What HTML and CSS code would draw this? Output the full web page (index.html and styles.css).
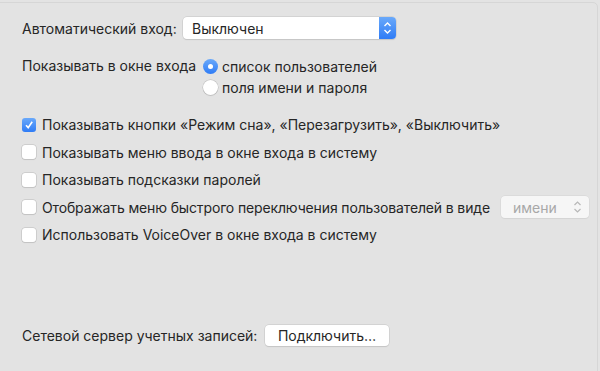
FILE: index.html
```html
<!DOCTYPE html>
<html lang="ru">
<head>
<meta charset="UTF-8" />
<title>Параметры входа</title>
<link rel="stylesheet" href="styles.css">
</head>
<body>
<div class="panel">

  <div class="row auto-login">
    <span class="label">Автоматический вход:</span>
    <div class="popup">
      <span>Выключен</span>
      <span class="stepper blue">
        <svg width="9" height="14" viewBox="0 0 9 14"><path d="M1.5 5 4.5 2 7.5 5M1.5 9 4.5 12 7.5 9" fill="none" stroke="#fff" stroke-width="1.4"/></svg>
      </span>
    </div>
  </div>

  <div class="row show-in">
    <span class="label">Показывать в окне входа</span>
    <div class="radios">
      <div class="radio-item"><span class="radio on"></span>список пользователей</div>
      <div class="radio-item"><span class="radio"></span>поля имени и пароля</div>
    </div>
  </div>

  <div class="checks">
    <div class="check-item"><span class="check on">
      <svg width="10" height="10" viewBox="0 0 10 10"><path d="M2 5.2 4.2 7.6 8.2 1.8" fill="none" stroke="#fff" stroke-width="1.6"/></svg>
    </span>Показывать кнопки «Режим сна», «Перезагрузить», «Выключить»</div>
    <div class="check-item"><span class="check"></span>Показывать меню ввода в окне входа в систему</div>
    <div class="check-item"><span class="check"></span>Показывать подсказки паролей</div>
    <div class="check-item"><span class="check"></span><span class="tight">Отображать меню быстрого переключения пользователей в виде</span>
      <div class="popup small disabled">
        <span>имени</span>
        <span class="stepper">
          <svg width="9" height="14" viewBox="0 0 9 14"><path d="M1.5 5 4.5 2 7.5 5M1.5 9 4.5 12 7.5 9" fill="none" stroke="#b8b8b8" stroke-width="1.2"/></svg>
        </span>
      </div>
    </div>
    <div class="check-item"><span class="check"></span>Использовать VoiceOver в окне входа в систему</div>
  </div>

  <div class="row server">
    <span class="label">Сетевой сервер учетных записей:</span>
    <button class="btn">Подключить…</button>
  </div>

</div>
</body>
</html>
```

FILE: styles.css
```css
html, body {
  margin: 0;
  height: 100%;
}

body {
  background-color: #e3e3e3;
  font-family: Inter, "Noto Sans", sans-serif;
  font-size: 14px;
  color: #262626;
  overflow: hidden;
}

.panel {
  position: relative;
  margin: 2px 2px 0 -10px;
  height: 380px;
  border: 1px solid #d6d6d6;
  border-radius: 5px;
  padding: 0 0 0 31px;
  box-sizing: border-box;
}

.row {
  display: flex;
  align-items: center;
}

.auto-login {
  margin-top: 14px;
  height: 22px;
}

.auto-login .label {
  width: 161px;
}

.popup {
  display: flex;
  align-items: center;
  justify-content: space-between;
  flex-shrink: 0;
  width: 213px;
  height: 22px;
  box-sizing: border-box;
  background: #fff;
  border-radius: 4px;
  box-shadow: 0 0 0 0.5px #c4c4c4, 0 1px 1px rgba(0, 0, 0, 0.12);
  padding-left: 9px;
  overflow: hidden;
}

.stepper {
  display: flex;
  align-items: center;
  justify-content: center;
  width: 17px;
  height: 100%;
}

.stepper.blue {
  background: linear-gradient(#6aa9fa, #2f7cf6);
}

.show-in {
  margin-top: 17px;
  align-items: flex-start;
}

.show-in .label {
  width: 181px;
  line-height: 20px;
}

.radios {
  display: flex;
  flex-direction: column;
  gap: 1px;
}

.radio-item {
  display: flex;
  align-items: center;
  height: 20px;
}

.radio {
  width: 15px;
  height: 15px;
  border-radius: 50%;
  box-sizing: border-box;
  background: #fff;
  box-shadow: 0 0 0 0.5px #b9b9b9, 0 1px 1px rgba(0, 0, 0, 0.1);
  margin-right: 4px;
  position: relative;
}

.radio.on {
  background: linear-gradient(#6aa9fa, #2f7cf6);
  box-shadow: none;
}

.radio.on::after {
  content: "";
  position: absolute;
  left: 5px;
  top: 5px;
  width: 5px;
  height: 5px;
  border-radius: 50%;
  background: #fff;
}

.checks {
  margin-top: 14px;
  display: flex;
  flex-direction: column;
}

.check-item {
  display: flex;
  align-items: center;
  height: 27.5px;
  white-space: nowrap;
}

.tight {
  letter-spacing: -0.14px;
}

.check {
  display: flex;
  align-items: center;
  justify-content: center;
  flex-shrink: 0;
  width: 14px;
  height: 14px;
  box-sizing: border-box;
  border-radius: 3px;
  background: #fff;
  box-shadow: 0 0 0 0.5px #b9b9b9, 0 1px 1px rgba(0, 0, 0, 0.1);
  margin-right: 6px;
}

.check.on {
  background: linear-gradient(#6aa9fa, #2f7cf6);
  box-shadow: none;
}

.popup.small {
  width: 88px;
  margin-left: 11px;
  padding-left: 12px;
  color: #a8a8a8;
  box-shadow: 0 0 0 0.5px #d4d4d4, 0 1px 1px rgba(0, 0, 0, 0.06);
  background: #f6f6f6;
}

.popup.small .stepper {
  width: 22px;
}

.server {
  margin-top: 76px;
}

.server .label {
  width: 243px;
}

.btn {
  width: 124px;
  height: 21px;
  border: none;
  border-radius: 4px;
  background: #fff;
  box-shadow: 0 0 0 0.5px #c4c4c4, 0 1px 1px rgba(0, 0, 0, 0.12);
  font: inherit;
  color: #262626;
  padding: 0;
}
```
